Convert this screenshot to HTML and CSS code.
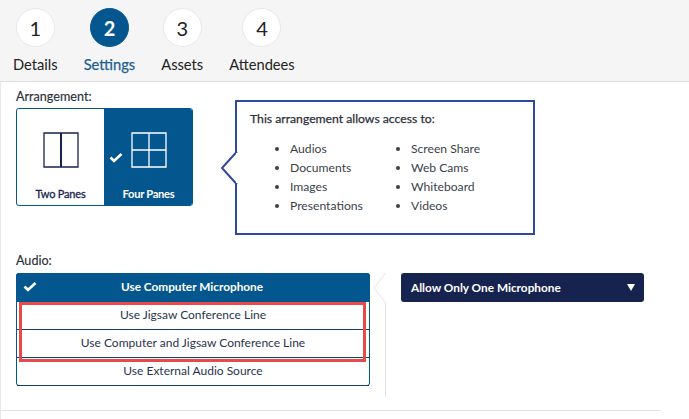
FILE: index.html
```html
<!DOCTYPE html>
<html lang="en">
<head>
<meta charset="utf-8">
<title>Settings</title>
<link rel="stylesheet" href="styles.css">
</head>
<body>
<header class="steps">
  <div class="step"><span class="num">1</span><span class="name">Details</span></div>
  <div class="step active"><span class="num">2</span><span class="name">Settings</span></div>
  <div class="step"><span class="num">3</span><span class="name">Assets</span></div>
  <div class="step"><span class="num">4</span><span class="name">Attendees</span></div>
</header>
<main class="content">
  <section class="arrangement">
    <div class="arr-left">
      <div class="label">Arrangement:</div>
      <div class="panes">
        <div class="pane">
          <svg class="pane-icon" width="36" height="36" viewBox="0 0 36 36"><path d="M1 1H35V35H1Z" fill="none" stroke="#17234f" stroke-width="1.3"/><path d="M18 1V35" stroke="#17234f" stroke-width="2"/></svg>
          <span class="pane-name">Two Panes</span>
        </div>
        <div class="pane selected">
          <svg class="pane-check" width="14" height="11" viewBox="0 0 14 11"><path d="M1.5 5.5L5 9L12.5 2" fill="none" stroke="#fff" stroke-width="2.6"/></svg>
          <svg class="pane-icon" width="36" height="36" viewBox="0 0 36 36"><path d="M1 1H35V35H1ZM18 1V35M1 18H35" fill="none" stroke="#fff" stroke-width="1.3"/></svg>
          <span class="pane-name">Four Panes</span>
        </div>
      </div>
    </div>
    <div class="callout">
      <svg class="callout-tip" width="18" height="36" viewBox="0 0 18 36"><path d="M17 1.5L2 18L17 34.5" fill="#fff" stroke="#2f4a9c" stroke-width="2"/><rect x="16" y="3" width="2" height="30" fill="#fff"/></svg>
      <div class="callout-title">This arrangement allows access to:</div>
      <div class="callout-cols">
        <ul><li>Audios</li><li>Documents</li><li>Images</li><li>Presentations</li></ul>
        <ul><li>Screen Share</li><li>Web Cams</li><li>Whiteboard</li><li>Videos</li></ul>
      </div>
    </div>
  </section>
  <section class="audio">
    <div class="label">Audio:</div>
    <div class="audio-row">
      <div class="options">
        <div class="option selected">
          <svg class="option-check" width="14" height="11" viewBox="0 0 14 11"><path d="M1.5 5.5L5 9L12.5 2" fill="none" stroke="#fff" stroke-width="2.6"/></svg>
          Use Computer Microphone
        </div>
        <div class="option">Use Jigsaw Conference Line</div>
        <div class="option">Use Computer and Jigsaw Conference Line</div>
        <div class="option">Use External Audio Source</div>
        <div class="highlight"></div>
      </div>
      <svg class="separator" width="15" height="124" viewBox="0 0 15 124"><path d="M13.5 0L2 15L13.5 30V124" fill="none" stroke="#e3e4e6" stroke-width="1"/></svg>
      <div class="dropdown"><span>Allow Only One Microphone</span><span class="caret"></span></div>
    </div>
  </section>
  <div class="rule"></div>
</main>
</body>
</html>
```
FILE: styles.css
```css
* { box-sizing: border-box; }
html, body { margin: 0; height: 100%; }
body {
  width: 689px;
  height: 419px;
  overflow: hidden;
  background: #fff;
  color: #2b2f38;
  font-family: Lato, "Open Sans", sans-serif;
  font-size: 12px;
}
.steps {
  display: flex;
  gap: 26px;
  height: 82px;
  padding: 8px 0 0 13px;
  background: #f5f5f5;
  border-bottom: 1px solid #dfdfdf;
}
.step {
  display: flex;
  flex-direction: column;
  align-items: center;
  gap: 9px;
}
.num {
  display: flex;
  align-items: center;
  justify-content: center;
  width: 39px;
  height: 39px;
  border-radius: 50%;
  background: #fff;
  border: 1px solid #e8e8e8;
  color: #222;
  font-size: 20px;
}
.name {
  font-size: 14.7px;
  line-height: 17px;
  color: #222;
}
.active .num {
  background: #04568f;
  border-color: #04568f;
  color: #fff;
  font-weight: 700;
}
.active .name {
  color: #1b5f92;
  -webkit-text-stroke: 0.25px #1b5f92;
}
.content {
  position: relative;
  height: 337px;
  padding-left: 15px;
  border-left: 1px solid #e8e8e8;
}
.label {
  font-size: 12.6px;
  line-height: 15px;
  color: #2b2f38;
  -webkit-text-stroke: 0.15px #2b2f38;
}
.arrangement {
  display: flex;
  align-items: flex-start;
  gap: 42px;
  padding-top: 7px;
  height: 171px;
}
.panes {
  display: flex;
  width: 177px;
  height: 98px;
  margin-top: 4px;
  border: 1px solid #04568f;
  border-radius: 3px;
  overflow: hidden;
}
.pane {
  flex: none;
  width: 87px;
  display: flex;
  flex-direction: column;
  align-items: center;
  padding-top: 23px;
  position: relative;
  color: #17234f;
}
.pane.selected {
  width: 89px;
  background: #04568f;
  color: #fff;
}
.pane-name {
  margin-top: 19px;
  font-size: 11.2px;
  line-height: 14px;
  letter-spacing: -0.3px;
  font-weight: 700;
}
.pane:first-child .pane-name {
  font-size: 11px;
  font-weight: 400;
  letter-spacing: -0.2px;
  -webkit-text-stroke: 0.3px #17234f;
}
.pane-check {
  position: absolute;
  left: 5px;
  top: 43px;
}
.callout {
  position: relative;
  width: 300px;
  height: 135px;
  margin-top: 11px;
  padding: 9px 0 0 13px;
  border: 2px solid #2f4a9c;
}
.callout-tip {
  position: absolute;
  left: -17px;
  top: 48px;
}
.callout-title {
  font-size: 12.2px;
  line-height: 15px;
  color: #2b2f38;
  -webkit-text-stroke: 0.25px #2b2f38;
}
.callout-cols {
  display: flex;
  margin-top: 13px;
}
.callout-cols ul {
  margin: 0;
  padding: 0 0 0 40px;
  width: 121px;
  font-size: 12.15px;
  line-height: 19px;
  color: #3b3f4a;
}
.audio-row {
  display: flex;
  align-items: flex-start;
  margin-top: 5px;
}
.options {
  position: relative;
  width: 354px;
  height: 113px;
  border: 1px solid #04568f;
  border-radius: 3px;
}
.option {
  position: relative;
  height: 28px;
  border-bottom: 1px solid #17406b;
  font-size: 12px;
  line-height: 25px;
  text-align: center;
  color: #2b3350;
}
.option:last-of-type { border-bottom: 0; }
.option.selected {
  height: 29px;
  margin: -1px -1px 0;
  padding-right: 2px;
  background: #04568f;
  color: #fff;
  font-size: 11.8px;
  font-weight: 700;
  line-height: 27px;
  border-radius: 3px 3px 0 0;
  border-bottom: 0;
}
.option-check {
  position: absolute;
  left: 7px;
  top: 8px;
}
.highlight {
  position: absolute;
  left: 2px;
  right: 3px;
  top: 28px;
  height: 60px;
  border: 3px solid #e84a4a;
}
.separator {
  margin-left: 2px;
  flex: none;
}
.dropdown {
  display: flex;
  align-items: center;
  justify-content: space-between;
  width: 243px;
  height: 29px;
  margin-left: 14px;
  padding: 0 9px 0 10px;
  background: #17234f;
  border-radius: 3px;
  color: #fff;
  font-size: 11.8px;
  font-weight: 700;
}
.caret {
  width: 0;
  height: 0;
  border-left: 4.5px solid transparent;
  border-right: 4.5px solid transparent;
  border-top: 7px solid #fff;
}
.rule {
  position: absolute;
  left: 0;
  top: 328px;
  width: 660px;
  border-top: 1px solid #e6e6e6;
}
```
